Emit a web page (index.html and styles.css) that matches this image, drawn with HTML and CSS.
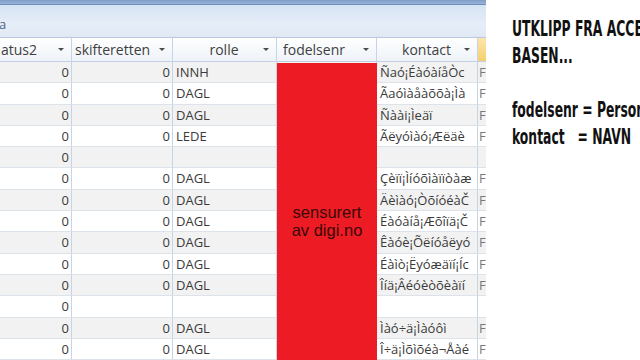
FILE: index.html
```html
<!DOCTYPE html>
<html lang="no">
<head>
<meta charset="utf-8">
<title>Utklipp fra Access-basen</title>
<link rel="stylesheet" href="styles.css">
</head>
<body>
<div class="page">
  <div class="access">
    <div class="titlebar"></div>
    <div class="ribbon"><span class="tab">a</span></div>
    <div class="sheet">
      <div class="row head">
        <div class="cell c1"><span class="cap">atus2</span><span class="arrow"></span></div>
        <div class="cell c2"><span class="cap">skifteretten</span><span class="arrow"></span></div>
        <div class="cell c3 center"><span class="cap">rolle</span><span class="arrow"></span></div>
        <div class="cell c4"><span class="cap">fodelsenr</span><span class="arrow"></span></div>
        <div class="cell c5 center"><span class="cap">kontact</span><span class="arrow"></span></div>
        <div class="cell c6 sel"></div>
      </div>
      <div class="row"><div class="cell num">0</div><div class="cell num">0</div><div class="cell txt">INNH</div><div class="cell"></div><div class="cell txt">Ñaó¡ÉàóàíåÒc</div><div class="cell more">F</div></div>
      <div class="row"><div class="cell num">0</div><div class="cell num">0</div><div class="cell txt">DAGL</div><div class="cell"></div><div class="cell txt">Ãaóìàåàõõà¡Ìà</div><div class="cell more">F</div></div>
      <div class="row"><div class="cell num">0</div><div class="cell num">0</div><div class="cell txt">DAGL</div><div class="cell"></div><div class="cell txt">Ñàài¡Ìeäï</div><div class="cell more">F</div></div>
      <div class="row"><div class="cell num">0</div><div class="cell num">0</div><div class="cell txt">LEDE</div><div class="cell"></div><div class="cell txt">Ãëyóìàó¡Æëäè</div><div class="cell more">F</div></div>
      <div class="row"><div class="cell num">0</div><div class="cell num"></div><div class="cell txt"></div><div class="cell"></div><div class="cell txt"></div><div class="cell more"></div></div>
      <div class="row"><div class="cell num">0</div><div class="cell num">0</div><div class="cell txt">DAGL</div><div class="cell"></div><div class="cell txt">Çèïï¡Ìíóõìàïïòàæ</div><div class="cell more">F</div></div>
      <div class="row"><div class="cell num">0</div><div class="cell num">0</div><div class="cell txt">DAGL</div><div class="cell"></div><div class="cell txt">Äèìàó¡ÒõíóéàČ</div><div class="cell more">F</div></div>
      <div class="row"><div class="cell num">0</div><div class="cell num">0</div><div class="cell txt">DAGL</div><div class="cell"></div><div class="cell txt">Éàóàíå¡Æõîïä¡Č</div><div class="cell more">F</div></div>
      <div class="row"><div class="cell num">0</div><div class="cell num">0</div><div class="cell txt">DAGL</div><div class="cell"></div><div class="cell txt">Êàóè¡Õëíóåëyó</div><div class="cell more">F</div></div>
      <div class="row"><div class="cell num">0</div><div class="cell num">0</div><div class="cell txt">DAGL</div><div class="cell"></div><div class="cell txt">Éàìò¡Ëyóæäïí¡Íc</div><div class="cell more">F</div></div>
      <div class="row"><div class="cell num">0</div><div class="cell num">0</div><div class="cell txt">DAGL</div><div class="cell"></div><div class="cell txt">Îíä¡Âéóèòõèàïí</div><div class="cell more">F</div></div>
      <div class="row"><div class="cell num">0</div><div class="cell num"></div><div class="cell txt"></div><div class="cell"></div><div class="cell txt"></div><div class="cell more"></div></div>
      <div class="row"><div class="cell num">0</div><div class="cell num">0</div><div class="cell txt">DAGL</div><div class="cell"></div><div class="cell txt">Ìàó÷ä¡Ìàóôì</div><div class="cell more">F</div></div>
      <div class="row"><div class="cell num">0</div><div class="cell num">0</div><div class="cell txt">DAGL</div><div class="cell"></div><div class="cell txt">Î÷ä¡Ìõìõéà¬Åàé</div><div class="cell more">F</div></div>
      <div class="censor"><span>sensurert<br>av digi.no</span></div>
    </div>
  </div>
  <div class="notes">
    <div class="notes-inner">
      <p>UTKLIPP FRA ACCESS-</p>
      <p>BASEN...</p>
      <p class="gap">fodelsenr = Personnummer</p>
      <p>kontact&#160;&#160; = NAVN</p>
    </div>
  </div>
</div>
</body>
</html>
```

FILE: styles.css
```css
html, body {
  margin: 0;
  padding: 0;
  background: #ffffff;
}

.page {
  width: 640px;
  height: 360px;
  overflow: hidden;
  display: flex;
}

.access {
  width: 486px;
  flex: none;
  display: flex;
  flex-direction: column;
  overflow: hidden;
  font-family: "Open Sans", "Noto Sans", sans-serif;
}

.titlebar {
  height: 4px;
  background: linear-gradient(#7e9cc8, #9bb4d8);
  border-bottom: 1px solid #6f8fbd;
}

.ribbon {
  height: 32px;
  background: linear-gradient(#d6e3f3, #e6eef8 60%, #dfe8f4);
  border-bottom: 1px solid #b9c8dc;
  display: flex;
  align-items: flex-start;
}

.tab {
  font-size: 13px;
  color: #4f6283;
  margin-top: 11px;
  margin-left: -1px;
  line-height: 16px;
}

.sheet {
  position: relative;
  flex: 1;
  overflow: hidden;
}

.row {
  display: grid;
  grid-template-columns: 72px 101px 104px 100px 101px 1fr;
  height: 21.3px;
  background: #f2f2f2;
}

.row:nth-child(odd) {
  background: #ffffff;
}

.row.head {
  height: 24px;
  background: linear-gradient(#ffffff, #edf2f8);
}

.cell {
  box-sizing: border-box;
  border-right: 1px solid #c6d4e7;
  border-bottom: 1px solid #dde3eb;
  overflow: hidden;
  white-space: nowrap;
  font-size: 13px;
  line-height: 20px;
  color: #3a3a3a;
}

.head .cell {
  display: flex;
  align-items: center;
  border-bottom: 1px solid #c3d0e2;
  font-size: 14px;
  color: #3f3f3f;
  line-height: 22px;
}

.head .cap {
  padding-left: 3px;
}

.head .c1 .cap {
  padding-left: 1px;
}

.head .c4 .cap {
  padding-left: 6px;
}

.head .center .cap {
  flex: 1;
  text-align: center;
  padding-left: 12px;
}

.arrow {
  margin-left: auto;
  margin-right: 7px;
  width: 0;
  height: 0;
  border-left: 3px solid transparent;
  border-right: 3px solid transparent;
  border-top: 3px solid #4a4a4a;
  flex: none;
}

.head .center .arrow {
  margin-left: 0;
}

.head .sel {
  background: linear-gradient(#fbe6ac, #f6cf6e);
  border-right: none;
}

.num {
  text-align: right;
  padding-right: 2px;
}

.txt {
  padding-left: 3px;
}

.more {
  border-right: none;
  padding-left: 1px;
  color: #777777;
}

.censor {
  position: absolute;
  left: 277px;
  top: 25px;
  width: 100px;
  bottom: 0;
  background: #ed1c24;
  display: flex;
  align-items: center;
  justify-content: center;
  padding-top: 18px;
  box-sizing: border-box;
  font-family: "Liberation Sans", Arial, sans-serif;
  font-size: 16.5px;
  line-height: 18px;
  color: #3a0808;
  text-align: center;
}

.notes {
  flex: 1;
  overflow: hidden;
  padding-left: 26px;
  padding-top: 16px;
}

.notes-inner {
  transform: scaleX(0.67);
  transform-origin: left top;
  width: 300px;
  font-family: "DejaVu Sans", sans-serif;
  font-stretch: condensed;
  font-weight: bold;
  font-size: 20.5px;
  line-height: 27px;
  color: #111111;
}

.notes-inner p {
  margin: 0;
  white-space: pre;
}

.notes-inner .gap {
  margin-top: 27px;
}
```
